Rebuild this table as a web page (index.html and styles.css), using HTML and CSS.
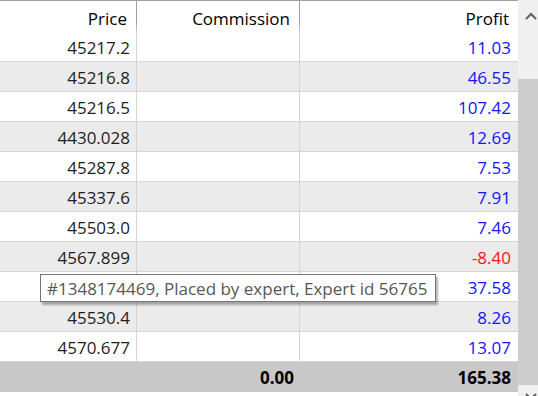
FILE: index.html
```html
<!DOCTYPE html>
<html>
<head>
<meta charset="utf-8">
<link rel="stylesheet" href="styles.css">
</head>
<body>
<div class="window">
  <div class="table">
    <div class="row head">
      <div class="cell c1">Price</div>
      <div class="cell c2">Commission</div>
      <div class="cell c3">Profit</div>
    </div>
    <div class="row"><div class="cell c1">45217.2</div><div class="cell c2"></div><div class="cell c3 pos">11.03</div></div>
    <div class="row alt"><div class="cell c1">45216.8</div><div class="cell c2"></div><div class="cell c3 pos">46.55</div></div>
    <div class="row"><div class="cell c1">45216.5</div><div class="cell c2"></div><div class="cell c3 pos">107.42</div></div>
    <div class="row alt"><div class="cell c1">4430.028</div><div class="cell c2"></div><div class="cell c3 pos">12.69</div></div>
    <div class="row"><div class="cell c1">45287.8</div><div class="cell c2"></div><div class="cell c3 pos">7.53</div></div>
    <div class="row alt"><div class="cell c1">45337.6</div><div class="cell c2"></div><div class="cell c3 pos">7.91</div></div>
    <div class="row"><div class="cell c1">45503.0</div><div class="cell c2"></div><div class="cell c3 pos">7.46</div></div>
    <div class="row alt"><div class="cell c1">4567.899</div><div class="cell c2"></div><div class="cell c3 neg">-8.40</div></div>
    <div class="row"><div class="cell c1"></div><div class="cell c2"></div><div class="cell c3 pos">37.58</div></div>
    <div class="row alt"><div class="cell c1">45530.4</div><div class="cell c2"></div><div class="cell c3 pos">8.26</div></div>
    <div class="row"><div class="cell c1">4570.677</div><div class="cell c2"></div><div class="cell c3 pos">13.07</div></div>
    <div class="row total">
      <div class="cell c1"></div>
      <div class="cell c2">0.00</div>
      <div class="cell c3">165.38</div>
    </div>
  </div>
  <div class="scrollbar">
    <div class="arrow up">
      <svg width="12" height="8" viewBox="0 0 12 8"><path d="M1 7 L6 2 L11 7" fill="none" stroke="#606060" stroke-width="2"/></svg>
    </div>
    <div class="track"></div>
    <div class="thumb"></div>
    <div class="arrow down">
      <svg width="12" height="8" viewBox="0 0 12 8"><path d="M1 1 L6 6 L11 1" fill="none" stroke="#606060" stroke-width="2"/></svg>
    </div>
  </div>
  <div class="tooltip">#1348174469, Placed by expert, Expert id 56765</div>
</div>
</body>
</html>
```
FILE: styles.css
```css
html, body {
  margin: 0;
  padding: 0;
  background: #ffffff;
}
body {
  font-family: "Open Sans", "Noto Sans", sans-serif;
  font-size: 17px;
  color: #1e1e1e;
}
.window {
  position: relative;
  width: 538px;
  height: 396px;
  overflow: hidden;
  display: flex;
}
.table {
  width: 518px;
  display: flex;
  flex-direction: column;
}
.row {
  display: grid;
  grid-template-columns: 137px 163px 218px;
  height: 29px;
  border-bottom: 1px solid #d4d4d4;
  background: #ffffff;
  flex: none;
}
.row.alt {
  background: #ebebeb;
}
.cell {
  display: flex;
  align-items: center;
  justify-content: flex-end;
  padding-right: 6px;
  padding-top: 2px;
  white-space: nowrap;
}
.c1, .c2 {
  border-right: 1px solid #d4d4d4;
}
.c3 {
  padding-right: 7px;
}
.head {
  border-top: 1px solid #a0a0a0;
  border-bottom: none;
  height: 31px;
  color: #000000;
}
.head .cell {
  padding-right: 9px;
  padding-top: 4px;
  background-image: linear-gradient(#a0a0a0, #a0a0a0 70%, #d4d4d4);
  background-size: 1px 100%;
  background-repeat: no-repeat;
  background-position: right top;
}
.head .c1, .head .c2 {
  border-right: 1px solid transparent;
  background-origin: border-box;
}
.head .c3 {
  background-image: none;
}
.pos { color: #1414ff; }
.neg { color: #ff1414; }
.total {
  height: 30px;
  background: #c8c8c8;
  border-bottom: none;
  font-weight: 700;
  color: #000000;
}
.total .cell {
  border-right: none;
  padding-top: 1px;
}
.total .c2 {
  padding-right: 6px;
}
.scrollbar {
  position: relative;
  width: 20px;
  background: #f0f0f0;
  display: flex;
  flex-direction: column;
}
.arrow {
  display: flex;
  justify-content: flex-end;
  padding-right: 1px;
}
.arrow.up {
  height: 79px;
  align-items: flex-start;
  padding-top: 12px;
  box-sizing: border-box;
}
.thumb {
  position: absolute;
  left: 0;
  right: 0;
  top: 79px;
  height: 306px;
  background: #cdcdcd;
}
.track { flex: 1; }
.arrow.down {
  height: 11px;
  align-items: flex-end;
  overflow: hidden;
}
.arrow.down svg { margin-bottom: -5px; }
.tooltip {
  position: absolute;
  left: 40px;
  top: 274px;
  width: 396px;
  height: 28px;
  box-sizing: border-box;
  border: 1px solid #767676;
  background: #ffffff;
  color: #575757;
  padding-left: 6px;
  padding-top: 1px;
  display: flex;
  align-items: center;
  white-space: nowrap;
  box-shadow: 2px 3px 2px rgba(0,0,0,0.3);
}
```
